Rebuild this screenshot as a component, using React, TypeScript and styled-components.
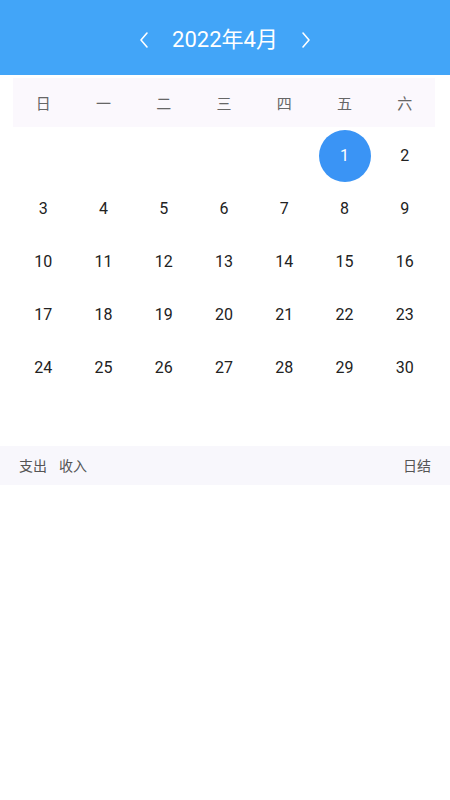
import styled, { createGlobalStyle } from "styled-components";

const GlobalStyle = createGlobalStyle`
  html, body {
    margin: 0;
    padding: 0;
    background: #ffffff;
  }
  body {
    font-family: Roboto, "Noto Sans CJK SC", sans-serif;
  }
`;

const Page = styled.div`
  width: 450px;
  min-height: 800px;
  background: #ffffff;
  display: flex;
  flex-direction: column;
`;

const Header = styled.div`
  height: 75px;
  background: #42a5f8;
  display: flex;
  align-items: center;
  justify-content: center;
  gap: 22px;
  color: #ffffff;
`;

const Title = styled.div`
  font-size: 22px;
  font-family: Roboto, "Noto Sans CJK SC", sans-serif;
  line-height: 1;
  padding-top: 4px;
`;

const Arrow = styled.button`
  background: none;
  border: none;
  padding: 0;
  width: 12px;
  height: 20px;
  display: flex;
  align-items: center;
  justify-content: center;
  margin-top: 4px;
`;

const WeekRow = styled.div`
  margin: 3px 15px 0 13px;
  height: 49px;
  background: #fbf8fd;
  display: grid;
  grid-template-columns: repeat(7, 1fr);
  align-items: center;
`;

const WeekCell = styled.div`
  text-align: center;
  font-size: 15px;
  color: #666666;
  font-family: "Noto Sans CJK SC", sans-serif;
`;

const DaysGrid = styled.div`
  margin: 1px 15px 0 13px;
  display: grid;
  grid-template-columns: repeat(7, 1fr);
  grid-auto-rows: 53px;
`;

const DayCell = styled.div<{ $selected?: boolean }>`
  display: flex;
  align-items: center;
  justify-content: center;
  padding-top: 2px;
  font-size: 16px;
  color: #222222;
  font-family: Roboto, sans-serif;

  span {
    width: 52px;
    height: 52px;
    border-radius: 50%;
    display: flex;
    align-items: center;
    justify-content: center;
    background: ${(p) => (p.$selected ? "#3a94f5" : "transparent")};
    color: ${(p) => (p.$selected ? "#ffffff" : "#222222")};
  }
`;

const Footer = styled.div`
  height: 38px;
  background: #f8f7fc;
  display: flex;
  align-items: center;
  padding: 0 19px 1px 19px;
  font-size: 14px;
  color: #555555;
  font-family: "Noto Sans CJK SC", sans-serif;
`;

const Tab = styled.div`
  margin-right: 12px;
`;

const Spacer = styled.div`
  flex: 1;
`;

const weekDays = ["日", "一", "二", "三", "四", "五", "六"];

function Chevron({ dir }: { dir: "left" | "right" }) {
  return (
    <svg width="10" height="18" viewBox="0 0 10 18">
      <path
        d={dir === "left" ? "M8 2 L2 9 L8 16" : "M2 2 L8 9 L2 16"}
        fill="none"
        stroke="#ffffff"
        strokeWidth="1.6"
        strokeLinecap="round"
        strokeLinejoin="round"
      />
    </svg>
  );
}

function App() {
  const cells: (number | null)[] = [];
  for (let i = 0; i < 5; i++) cells.push(null);
  for (let d = 1; d <= 30; d++) cells.push(d);
  while (cells.length < 42) cells.push(null);

  return (
    <Page>
      <GlobalStyle />
      <Header>
        <Arrow>
          <Chevron dir="left" />
        </Arrow>
        <Title>2022年4月</Title>
        <Arrow>
          <Chevron dir="right" />
        </Arrow>
      </Header>
      <WeekRow>
        {weekDays.map((w) => (
          <WeekCell key={w}>{w}</WeekCell>
        ))}
      </WeekRow>
      <DaysGrid>
        {cells.map((d, i) => (
          <DayCell key={i} $selected={d === 1}>
            {d ? <span>{d}</span> : null}
          </DayCell>
        ))}
      </DaysGrid>
      <Footer>
        <Tab>支出</Tab>
        <Tab>收入</Tab>
        <Spacer />
        <div>日结</div>
      </Footer>
    </Page>
  );
}

export default App;
